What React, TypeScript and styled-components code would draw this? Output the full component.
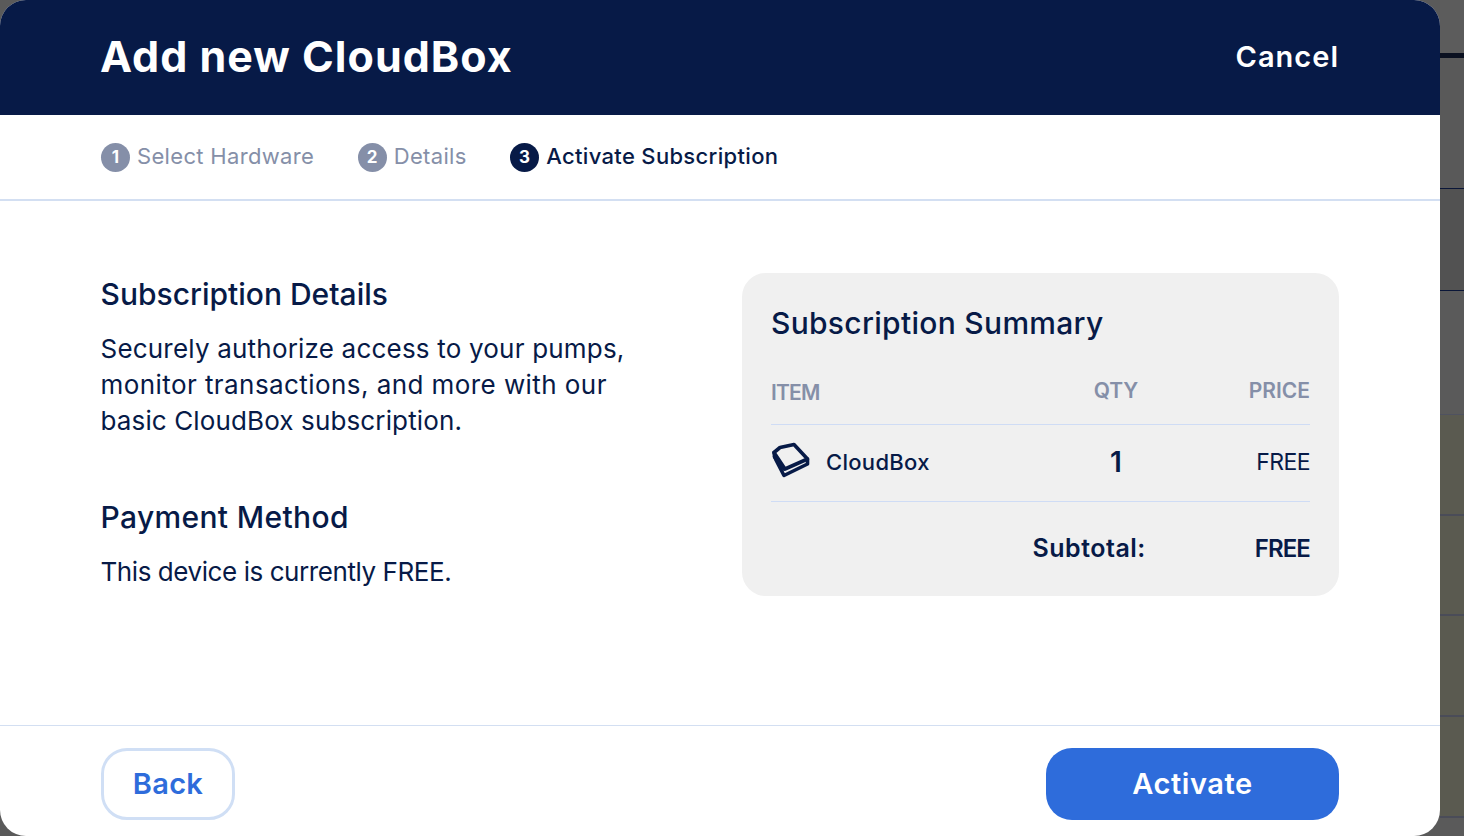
import React from "react";
import styled, { createGlobalStyle } from "styled-components";

const GlobalStyle = createGlobalStyle`
  html, body {
    margin: 0;
    padding: 0;
    height: 100%;
    overflow: hidden;
    background: #5a5a5a;
    font-family: "Inter", "Liberation Sans", sans-serif;
  }
`;

const Page = styled.div`
  display: flex;
  width: 1464px;
  height: 836px;
  overflow: hidden;
  background: #5a5a5a;
`;

const Modal = styled.div`
  width: 1440px;
  height: 836px;
  flex: none;
  display: flex;
  flex-direction: column;
  background: #ffffff;
  border-radius: 26px;
  overflow: hidden;
`;

const Backdrop = styled.div`
  flex: 1;
  display: flex;
  flex-direction: column;
`;

const BackdropRow = styled.div<{ $h: number; $bg: string; $line: string; $lineH?: number }>`
  height: ${(p) => p.$h}px;
  flex: none;
  box-sizing: border-box;
  background: ${(p) => p.$bg};
  border-bottom: ${(p) => p.$lineH ?? 1}px solid ${(p) => p.$line};
`;

const Header = styled.header`
  height: 115px;
  flex: none;
  box-sizing: border-box;
  padding: 0 101px 3px 100px;
  display: flex;
  align-items: center;
  justify-content: space-between;
  background: #071a47;
  color: #ffffff;
`;

const Title = styled.h1`
  margin: 0;
  font-size: 43px;
  font-weight: 700;
  letter-spacing: 1px;
`;

const Cancel = styled.button`
  border: 0;
  padding: 0;
  background: none;
  color: #ffffff;
  font: 600 29px "Inter", sans-serif;
  letter-spacing: 1px;
`;

const Stepper = styled.nav`
  height: 86px;
  flex: none;
  box-sizing: border-box;
  padding: 0 101px;
  display: flex;
  align-items: center;
  gap: 43.5px;
  border-bottom: 2px solid #d3dff2;
`;

const Step = styled.div<{ $active?: boolean }>`
  display: flex;
  align-items: center;
  gap: 7px;
  font-size: 22px;
  letter-spacing: 0.33px;
  font-weight: ${(p) => (p.$active ? 500 : 400)};
  color: ${(p) => (p.$active ? "#071a47" : "#858fa8")};
`;

const StepLabel = styled.span`
  padding-bottom: 2px;
`;

const StepNum = styled.span<{ $active?: boolean }>`
  width: 29px;
  height: 29px;
  border-radius: 50%;
  display: flex;
  align-items: center;
  justify-content: center;
  background: ${(p) => (p.$active ? "#071a47" : "#858fa8")};
  color: #ffffff;
  font-size: 17px;
  font-weight: 700;
`;

const Content = styled.main`
  flex: 1;
  box-sizing: border-box;
  padding: 72px 101px 0 100.5px;
  display: flex;
  justify-content: space-between;
  align-items: flex-start;
  color: #071a47;
`;

const Details = styled.section`
  width: 560px;
  padding-top: 3px;
`;

const SectionTitle = styled.h2<{ $spacing: number }>`
  margin: 0 0 19px;
  font-size: 30px;
  font-weight: 500;
  line-height: 36px;
  letter-spacing: ${(p) => p.$spacing}px;
`;

const Copy = styled.p`
  margin: 0 0 60px;
  font-size: 26px;
  line-height: 36px;
`;

const CopyLine = styled.span<{ $spacing: number }>`
  display: block;
  letter-spacing: ${(p) => p.$spacing}px;
`;

const Summary = styled.section`
  width: 597px;
  height: 323px;
  box-sizing: border-box;
  padding: 31px 29px 0;
  border-radius: 24px;
  background: #f0f0f0;
`;

const SummaryTitle = styled.h2`
  margin: 0 0 26px;
  font-size: 30px;
  font-weight: 500;
  line-height: 38px;
  letter-spacing: 0.3px;
`;

const TableRow = styled.div<{ $h: number; $pad?: number }>`
  height: ${(p) => p.$h}px;
  box-sizing: border-box;
  padding-bottom: ${(p) => p.$pad ?? 0}px;
  display: grid;
  grid-template-columns: 1fr 132px 128px;
  align-items: center;
  border-bottom: 1px solid #cfdcf5;
`;

const HeadCell = styled.div<{ $align?: string; $drop?: number; $spacing?: number }>`
  text-align: ${(p) => p.$align ?? "left"};
  padding-top: ${(p) => p.$drop ?? 0}px;
  letter-spacing: ${(p) => p.$spacing ?? 0}px;
  color: #858fa8;
  font-size: 21px;
  font-weight: 600;
`;

const ItemCell = styled.div`
  display: flex;
  align-items: center;
  gap: 15px;
  padding-bottom: 2px;
  font-size: 22px;
  font-weight: 500;
  letter-spacing: 0.3px;
`;

const IconWrap = styled.span`
  display: flex;
  margin-bottom: 4px;
`;

const Qty = styled.div`
  text-align: center;
  font-size: 28px;
  font-weight: 600;
  padding-bottom: 2px;
`;

const Price = styled.div`
  text-align: right;
  font-size: 23px;
  font-weight: 400;
  letter-spacing: -0.6px;
  padding-bottom: 2px;
`;

const SubtotalRow = styled.div`
  height: 92px;
  display: flex;
  align-items: center;
  justify-content: flex-end;
  font-size: 25px;
  font-weight: 600;
`;

const SubtotalLabel = styled.span`
  margin-right: 109px;
  letter-spacing: 0.5px;
`;

const SubtotalValue = styled.span`
  font-size: 24px;
  letter-spacing: -0.9px;
`;

const Footer = styled.footer`
  height: 111px;
  flex: none;
  box-sizing: border-box;
  padding: 22px 101px 0;
  display: flex;
  justify-content: space-between;
  align-items: flex-start;
  border-top: 1px solid #d3dff2;
`;

const BackButton = styled.button`
  width: 134px;
  height: 72px;
  padding: 0 0 2px;
  box-sizing: border-box;
  border: 3px solid #d0dff5;
  border-radius: 26px;
  background: #ffffff;
  color: #2e6cdb;
  font: 600 29px "Inter", sans-serif;
  letter-spacing: 0.3px;
`;

const ActivateButton = styled.button`
  width: 293px;
  height: 72px;
  padding: 0 0 2px;
  border: 0;
  border-radius: 26px;
  background: #2e6cdb;
  color: #ffffff;
  font: 600 29px "Inter", sans-serif;
  letter-spacing: 0.6px;
`;

const BoxIcon = () => (
  <svg width="40" height="36" viewBox="0 0 40 36" fill="none" stroke="#071a47" strokeWidth="3.6" strokeLinejoin="round" strokeLinecap="round">
    <path d="M3 10.5 L9 5.5 L23 2.5 L36.5 17 L14 27 Z" />
    <path d="M3 10.5 C3 13 3.5 15 5 18 L13 33.5 L36.5 22 V17" />
    <path d="M3.5 15 L13 27" />
  </svg>
);

const App: React.FC = () => {
  return (
    <Page>
      <GlobalStyle />
      <Modal>
        <Header>
          <Title>Add new CloudBox</Title>
          <Cancel>Cancel</Cancel>
        </Header>
        <Stepper>
          <Step>
            <StepNum>1</StepNum>
            <StepLabel>Select Hardware</StepLabel>
          </Step>
          <Step>
            <StepNum>2</StepNum>
            <StepLabel>Details</StepLabel>
          </Step>
          <Step $active>
            <StepNum $active>3</StepNum>
            <StepLabel>Activate Subscription</StepLabel>
          </Step>
        </Stepper>
        <Content>
          <Details>
            <SectionTitle $spacing={0}>Subscription Details</SectionTitle>
            <Copy>
              <CopyLine $spacing={0.2}>Securely authorize access to your pumps,</CopyLine>
              <CopyLine $spacing={0.43}>monitor transactions, and more with our</CopyLine>
              <CopyLine $spacing={0.13}>basic CloudBox subscription.</CopyLine>
            </Copy>
            <SectionTitle $spacing={0.35}>Payment Method</SectionTitle>
            <Copy>
              <CopyLine $spacing={-0.43}>This device is currently FREE.</CopyLine>
            </Copy>
          </Details>
          <Summary>
            <SummaryTitle>Subscription Summary</SummaryTitle>
            <TableRow $h={57} $pad={11}>
              <HeadCell $drop={4} $spacing={-0.8}>ITEM</HeadCell>
              <HeadCell $align="center">QTY</HeadCell>
              <HeadCell $align="right">PRICE</HeadCell>
            </TableRow>
            <TableRow $h={77}>
              <ItemCell>
                <IconWrap>
                  <BoxIcon />
                </IconWrap>
                CloudBox
              </ItemCell>
              <Qty>1</Qty>
              <Price>FREE</Price>
            </TableRow>
            <SubtotalRow>
              <SubtotalLabel>Subtotal:</SubtotalLabel>
              <SubtotalValue>FREE</SubtotalValue>
            </SubtotalRow>
          </Summary>
        </Content>
        <Footer>
          <BackButton>Back</BackButton>
          <ActivateButton>Activate</ActivateButton>
        </Footer>
      </Modal>
      <Backdrop>
        <BackdropRow $h={58} $bg="#5c5c5c" $line="#0a1020" $lineH={5} />
        <BackdropRow $h={131} $bg="#595959" $line="#0a1638" />
        <BackdropRow $h={102} $bg="#525252" $line="#0a1638" />
        <BackdropRow $h={124} $bg="#5a5a5a" $line="#4f5260" />
        <BackdropRow $h={101} $bg="#5a5a50" $line="#4a4c58" $lineH={2} />
        <BackdropRow $h={100} $bg="#5a5a50" $line="#4a4c58" $lineH={2} />
        <BackdropRow $h={101} $bg="#5a5a50" $line="#4a4c58" $lineH={2} />
        <BackdropRow $h={101} $bg="#5a5a50" $line="#4a4c58" $lineH={2} />
        <BackdropRow $h={18} $bg="#5a5a5a" $line="#5a5a5a" />
      </Backdrop>
    </Page>
  );
};

export default App;
